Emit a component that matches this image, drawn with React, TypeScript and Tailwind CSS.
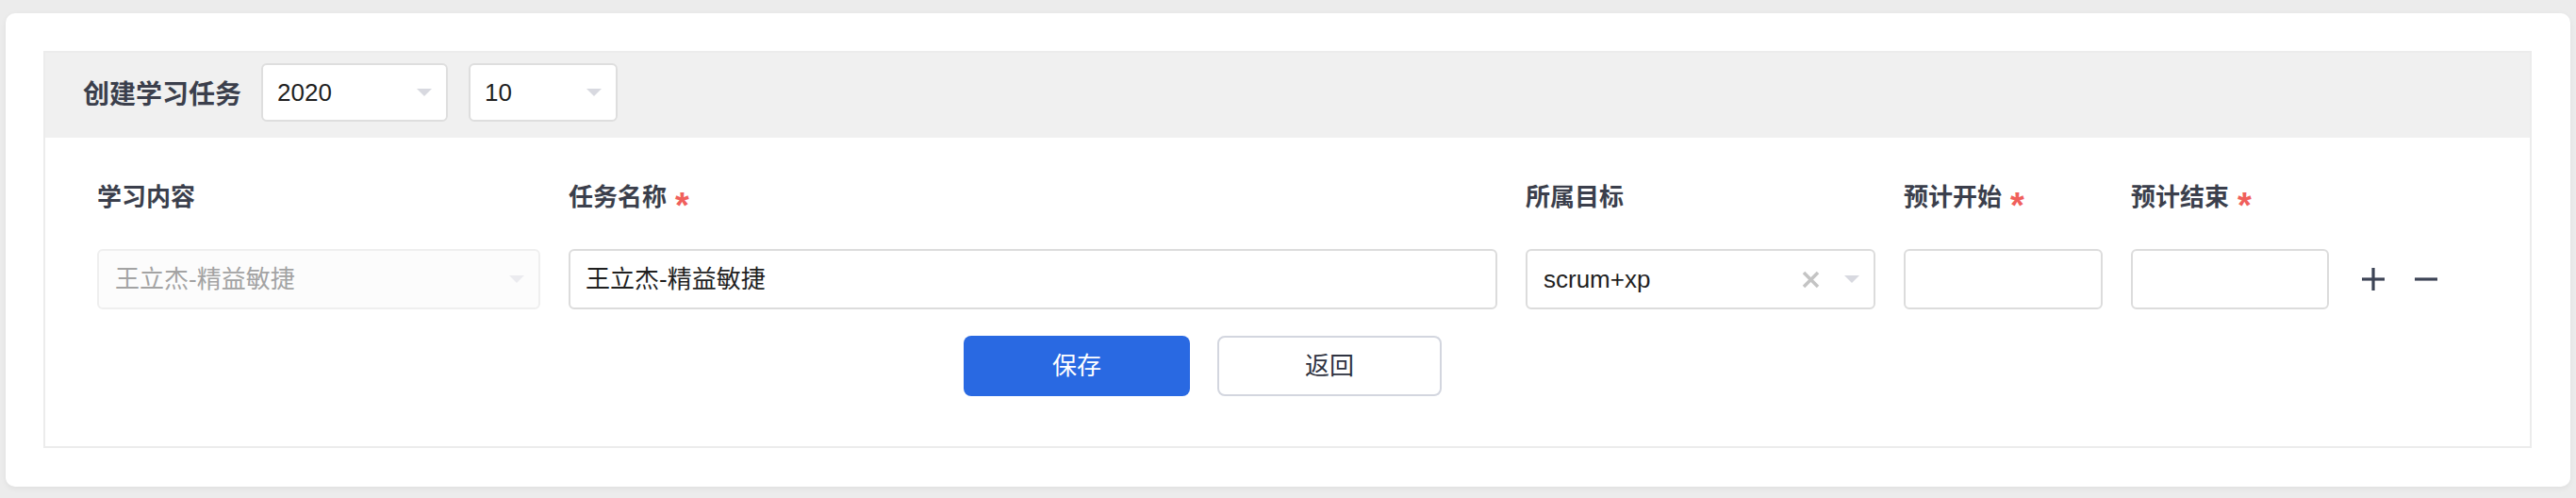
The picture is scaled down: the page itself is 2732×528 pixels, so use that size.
const FONT = "font-['Liberation_Sans','Noto_Sans_CJK_SC',sans-serif]";

function Caret({ light }: { light?: boolean }) {
  return (
    <svg width="16" height="8" viewBox="0 0 16 8" aria-hidden="true">
      <path d="M0 0h16L8 8z" fill={light ? "#ebebef" : "#d8d9e0"} />
    </svg>
  );
}

function ClearIcon() {
  return (
    <svg width="19" height="19" viewBox="0 0 19 19" aria-hidden="true">
      <line x1="2" y1="2" x2="17" y2="17" stroke="#c4c4c4" strokeWidth="3.5" />
      <line x1="17" y1="2" x2="2" y2="17" stroke="#c4c4c4" strokeWidth="3.5" />
    </svg>
  );
}

function PlusIcon() {
  return (
    <svg width="24" height="24" viewBox="0 0 24 24" aria-hidden="true">
      <line x1="0" y1="12" x2="24" y2="12" stroke="#3d4456" strokeWidth="3.2" />
      <line x1="12" y1="0" x2="12" y2="24" stroke="#3d4456" strokeWidth="3.2" />
    </svg>
  );
}

function MinusIcon() {
  return (
    <svg width="24" height="24" viewBox="0 0 24 24" aria-hidden="true">
      <line x1="0" y1="12" x2="24" y2="12" stroke="#3d4456" strokeWidth="3.2" />
    </svg>
  );
}

function Label({ text, required }: { text: string; required?: boolean }) {
  return (
    <div className="h-[40px] flex items-center text-[26px] font-bold text-[#3b3f4c] whitespace-nowrap">
      <span>{text}</span>
      {required && (
        <span className="ml-[9px] text-[38px] leading-none font-bold text-[#f0605c] translate-y-[9px]">*</span>
      )}
    </div>
  );
}

const COLS = [
  { label: "学习内容", w: "w-[470px]" },
  { label: "任务名称", w: "w-[985px]", required: true },
  { label: "所属目标", w: "w-[371px]" },
  { label: "预计开始", w: "w-[211px]", required: true },
  { label: "预计结束", w: "w-[210px]", required: true },
];

export default function App() {
  return (
    <div className={`min-h-[528px] bg-[#ececec] pt-[14px] px-[6px] pb-[12px] ${FONT}`}>
      <div className="rounded-[10px] bg-white pt-[40px] pl-[40px] pr-[41px] pb-[41px] shadow-[0_2px_6px_rgba(0,0,0,0.06)]">
        <div className="border-2 border-[#ececec]">
          {/* header */}
          <div className="h-[90px] bg-[#f0f0f0] flex items-center pl-[40px]">
            <span className="text-[28px] font-bold text-[#3b3f4c]">创建学习任务</span>
            <div className="ml-[21px] mb-[6px] w-[198px] h-[62px] bg-white border-2 border-[#dedede] rounded-[6px] flex items-center justify-between pl-[15px] pr-[15px]">
              <span className="text-[26px] text-[#1f1f1f]">2020</span>
              <Caret />
            </div>
            <div className="ml-[22px] mb-[6px] w-[158px] h-[62px] bg-white border-2 border-[#dedede] rounded-[6px] flex items-center justify-between pl-[15px] pr-[15px]">
              <span className="text-[26px] text-[#1f1f1f]">10</span>
              <Caret />
            </div>
          </div>

          {/* body */}
          <div className="pt-[43px] pb-[53px] pl-[55px]">
            <div className="flex gap-[30px]">
              {COLS.map((c) => (
                <div key={c.label} className={`flex flex-col ${c.w}`}>
                  <Label text={c.label} required={c.required} />
                </div>
              ))}
            </div>

            <div className="flex items-center gap-[30px] mt-[35px]">
              <div className="w-[470px] h-[64px] bg-[#fcfcfc] border-2 border-[#efefef] rounded-[6px] flex items-center justify-between pl-[17px] pr-[15px]">
                <span className="text-[26px] text-[#a3a3a3]">王立杰-精益敏捷</span>
                <Caret light />
              </div>
              <div className="w-[985px] h-[64px] border-2 border-[#dcdcdc] rounded-[6px] flex items-center pl-[16px]">
                <span className="text-[26px] text-[#1f1f1f]">王立杰-精益敏捷</span>
              </div>
              <div className="w-[371px] h-[64px] border-2 border-[#dcdcdc] rounded-[6px] flex items-center pl-[17px] pr-[15px]">
                <span className="text-[26px] text-[#1f1f1f] flex-1">scrum+xp</span>
                <ClearIcon />
                <span className="ml-[26px] flex">
                  <Caret />
                </span>
              </div>
              <div className="w-[211px] h-[64px] border-2 border-[#dcdcdc] rounded-[6px]" />
              <div className="w-[210px] h-[64px] border-2 border-[#dcdcdc] rounded-[6px]" />
              <div className="flex items-center gap-[32px] ml-[5px]">
                <PlusIcon />
                <MinusIcon />
              </div>
            </div>

            <div className="flex gap-[29px] mt-[28px] ml-[919px]">
              <button className="w-[240px] h-[64px] rounded-[8px] bg-[#2969e2] text-white text-[26px]">保存</button>
              <button className="w-[238px] h-[64px] rounded-[8px] border-2 border-[#d3d6df] bg-white text-[#2e3240] text-[26px]">返回</button>
            </div>
          </div>
        </div>
      </div>
    </div>
  );
}
